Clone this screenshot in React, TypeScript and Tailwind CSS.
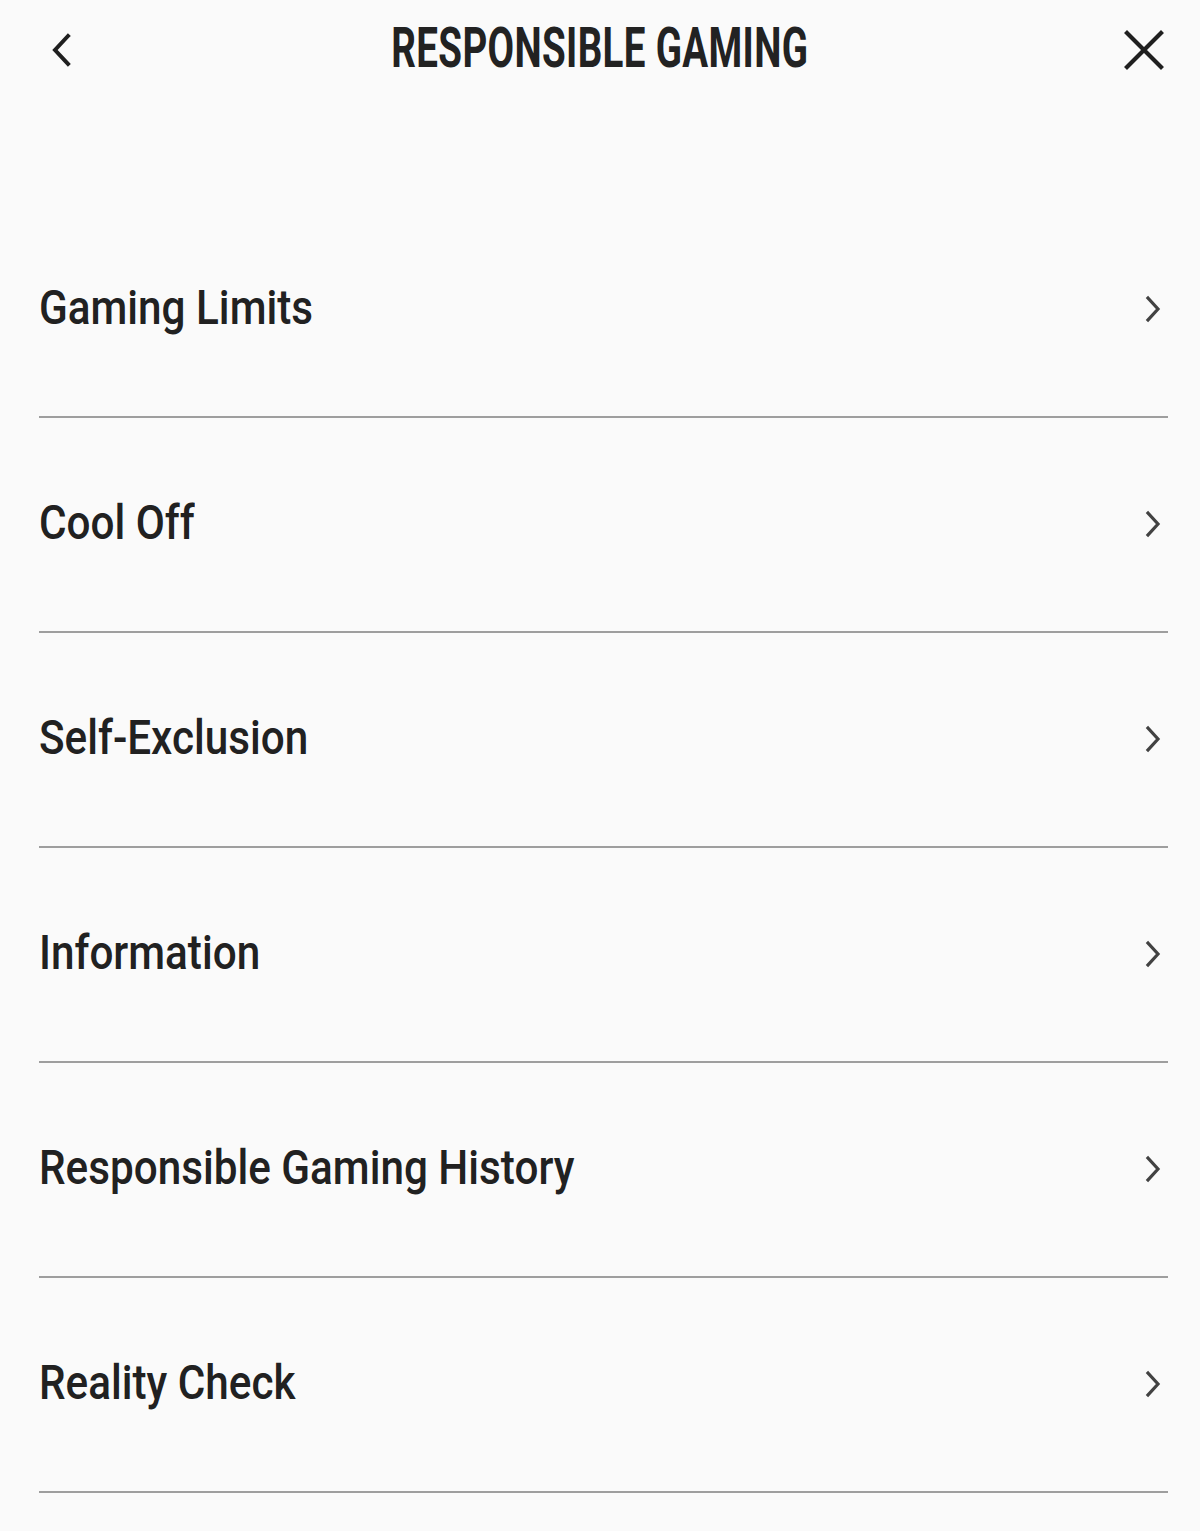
import React from "react";

const items = [
  "Gaming Limits",
  "Cool Off",
  "Self-Exclusion",
  "Information",
  "Responsible Gaming History",
  "Reality Check",
];

function ChevronRight() {
  return (
    <svg width="18" height="28" viewBox="0 0 18 28" fill="none">
      <path d="M4 3 L14 14 L4 25" stroke="#424242" strokeWidth="3.2" strokeLinecap="square" strokeLinejoin="miter" />
    </svg>
  );
}

export default function App() {
  return (
    <div className="min-h-[1531px] w-[1200px] bg-[#fafafa] text-[#212121]" style={{ fontFamily: "Roboto, 'Noto Sans', sans-serif" }}>
      <header className="relative flex h-[96px] items-center justify-center">
        <button className="absolute left-[44px] top-[30px] flex h-[40px] w-[34px] items-center justify-center">
          <svg width="26" height="34" viewBox="0 0 26 34" fill="none">
            <path d="M20 3 L7 17 L20 31" stroke="#1f1f1f" strokeWidth="4" strokeLinecap="square" />
          </svg>
        </button>
        <h1 className="scale-x-[0.7] whitespace-nowrap text-[55px] font-bold leading-none tracking-[0.5px] text-[#222]">
          RESPONSIBLE GAMING
        </h1>
        <button className="absolute right-[34px] top-[28px] flex h-[44px] w-[44px] items-center justify-center">
          <svg width="40" height="40" viewBox="0 0 40 40" fill="none">
            <path d="M3 3 L37 37 M37 3 L3 37" stroke="#1f1f1f" strokeWidth="4.2" strokeLinecap="square" />
          </svg>
        </button>
      </header>
      <ul className="mt-[107px] pl-[39px] pr-[32px]">
        {items.map((t) => (
          <li key={t} className="flex h-[215px] items-center justify-between border-b-2 border-[#9e9e9e] pb-[4px]">
            <span className="origin-left scale-x-[0.88] whitespace-nowrap text-[48px] font-medium leading-none text-[#212121]">
              {t}
            </span>
            <span className="mr-[6px] mt-[2px] flex items-center">
              <ChevronRight />
            </span>
          </li>
        ))}
      </ul>
    </div>
  );
}
